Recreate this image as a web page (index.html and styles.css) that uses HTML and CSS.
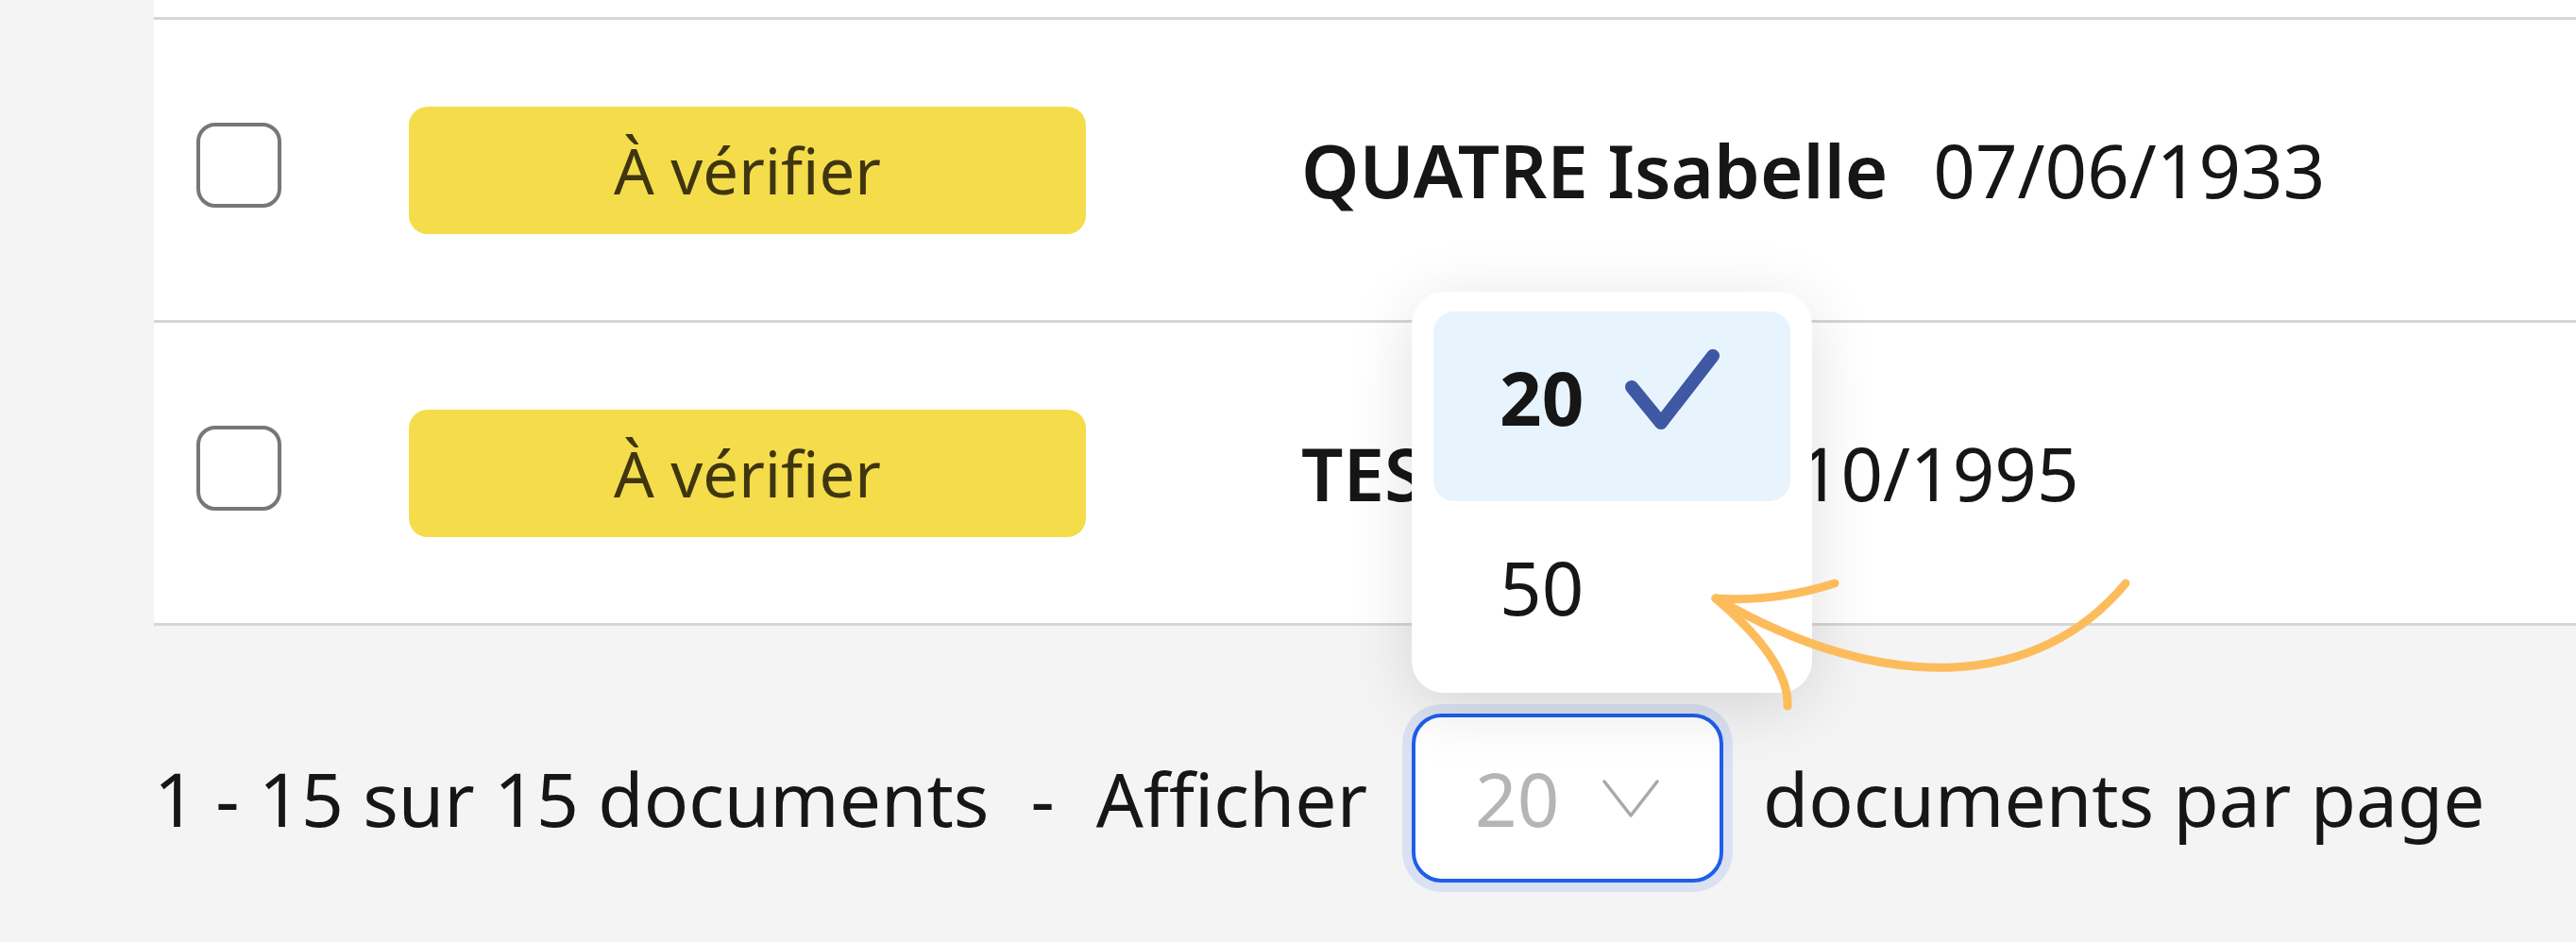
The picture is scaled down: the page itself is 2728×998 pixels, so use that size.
FILE: index.html
```html
<!DOCTYPE html>
<html lang="fr">
<head>
    <meta charset="UTF-8">
    <meta name="viewport" content="width=device-width, initial-scale=1.0">
    <title>Documents</title>

    <link rel="stylesheet" href="styles.css">
</head>
<body>
<div class="page">
    <div class="table">
        <div class="row row-prev"></div>
        <div class="row">
            <span class="check"></span>
            <span class="badge">À vérifier</span>
            <span class="patient"><b class="name">QUATRE Isabelle</b><span class="dob">07/06/1933</span></span>
        </div>
        <div class="row">
            <span class="check"></span>
            <span class="badge">À vérifier</span>
            <span class="patient"><b class="name">TEST Jean</b><span class="dob">01/10/1995</span></span>
        </div>
    </div>

    <div class="pager">
        <span>1 - 15 sur 15 documents</span>
        <span class="sep">-</span>
        <span>Afficher</span>
        <div class="per-page">
            <div class="select">
                <span class="select-value">20</span>
                <svg class="chevron" width="62" height="42" viewBox="0 0 62 42">
                    <polyline points="3,3 31,39 59,3" fill="none" stroke="#a9a9a9" stroke-width="3.5" stroke-linecap="round" stroke-linejoin="round"/>
                </svg>
            </div>
            <div class="menu">
                <div class="option selected">
                    <span>20</span>
                    <svg class="tick" width="106" height="92" viewBox="0 0 106 92">
                        <polyline points="10,43 41,81 96,10" fill="none" stroke="#3f58a3" stroke-width="14" stroke-linecap="round" stroke-linejoin="round"/>
                    </svg>
                </div>
                <div class="option">50</div>
            </div>
        </div>
        <span>documents par page</span>
    </div>

    <!-- flèche d'annotation -->
    <svg class="arrow" width="2728" height="998" viewBox="0 0 2728 998">
        <g fill="none" stroke="#fdbc5b" stroke-width="9" stroke-linecap="round" stroke-linejoin="round">
            <path d="M2251 618 C2160 728 2000 740 1817 634"/>
            <path d="M1817 634 Q1880 638 1943 618"/>
            <path d="M1817 634 Q1895 700 1893 748"/>
        </g>
    </svg>
</div>
</body>
</html>
```

FILE: styles.css
```css
body {
    margin: 0;
    background-color: #f4f4f4;
    font-family: "Noto Sans", "Open Sans", sans-serif;
    color: #161616;
}
.page {
    position: relative;
    height: 998px;
    overflow: hidden;
    padding-left: 163px;
}
.table {
    background-color: #fff;
}
.row {
    display: flex;
    align-items: center;
    height: 318px;
    padding-left: 45px;
    border-bottom: 3px solid #d6d6d6;
}
.row-prev {
    height: 18px;
}
.check {
    box-sizing: border-box;
    width: 90px;
    height: 90px;
    margin-bottom: 11px;
    border: 4px solid #777;
    border-radius: 20px;
    background-color: #fff;
}
.badge {
    display: flex;
    align-items: center;
    justify-content: center;
    width: 717px;
    height: 135px;
    margin-left: 135px;
    border-radius: 20px;
    background-color: #f5dc4b;
    color: #3f3610;
    font-size: 67px;
}
.patient {
    margin-left: 228px;
    font-size: 78px;
}
.name {
    font-weight: 600;
    margin-right: 48px;
}
.pager {
    display: flex;
    align-items: center;
    padding-top: 93px;
    font-size: 78.5px;
}
.sep {
    margin: 0 44px;
}
.per-page {
    position: relative;
    margin: 0 42px 0 47px;
}
.select {
    box-sizing: border-box;
    display: flex;
    align-items: center;
    width: 330px;
    height: 179px;
    padding-left: 63px;
    border: 4px solid #1f5eea;
    border-radius: 32px;
    background-color: #fff;
    box-shadow: 0 0 0 10px rgba(31, 94, 234, 0.12);
    color: #b5b5b5;
    font-size: 78px;
}
.chevron {
    margin-left: 45px;
}
.menu {
    position: absolute;
    left: 0;
    bottom: calc(100% + 22px);
    box-sizing: border-box;
    width: 424px;
    padding: 21px 23px 2px;
    border-radius: 34px;
    background-color: #fff;
    box-shadow: 0 14px 70px rgba(0, 0, 0, 0.13);
    color: #161616;
    font-size: 78px;
}
.option {
    box-sizing: border-box;
    display: flex;
    align-items: center;
    height: 201px;
    padding: 0 0 20px 70px;
    border-radius: 22px;
}
.option.selected {
    background-color: #e8f4fd;
    font-weight: 700;
}
.tick {
    margin: -16px 0 0 41px;
}
.arrow {
    position: absolute;
    left: 0;
    top: 0;
    pointer-events: none;
}
```
